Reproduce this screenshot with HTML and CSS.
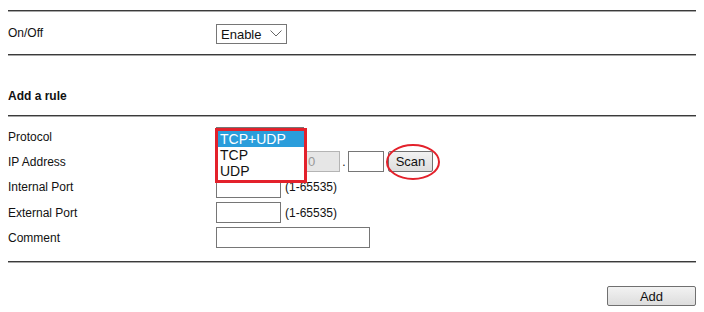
FILE: index.html
```html
<!DOCTYPE html>
<html>
<head>
    <meta charset="UTF-8">
    <title>Port Forwarding</title>
    <link rel="stylesheet" href="styles.css">
</head>
<body>
    <div class="rule"></div>
    <div class="row-switch">
        <div class="label">On/Off</div>
        <div class="field">
            <div class="select">
                <span>Enable</span>
                <svg class="chevron" width="12" height="7" viewBox="0 0 12 7"><path d="M0.5 0.5 L6 6 L11.5 0.5" fill="none" stroke="#666" stroke-width="1"/></svg>
            </div>
        </div>
    </div>
    <div class="rule"></div>

    <h2 class="section-title">Add a rule</h2>
    <div class="rule"></div>

    <div class="rule-form">
        <div class="form-row">
            <div class="label">Protocol</div>
            <div class="field proto-cell">
                <div class="select proto-select"></div>
                <!-- opened list of the protocol select -->
                <ul class="proto-list">
                    <li class="active">TCP+UDP</li>
                    <li>TCP</li>
                    <li>UDP</li>
                </ul>
            </div>
        </div>
        <div class="form-row">
            <div class="label">IP Address</div>
            <div class="field">
                <input class="ip" type="text" value="192" disabled>
                <span class="dot">.</span>
                <input class="ip" type="text" value="168" disabled>
                <span class="dot">.</span>
                <input class="ip" type="text" value="0" disabled>
                <span class="dot">.</span>
                <input class="ip" type="text">
                <span class="scan-wrap">
                    <button class="btn scan">Scan</button>
                    <svg class="mark" width="56" height="38" viewBox="0 0 56 38"><ellipse cx="28" cy="19" rx="26" ry="17" fill="none" stroke="#e3212b" stroke-width="2"/></svg>
                </span>
            </div>
        </div>
        <div class="form-row tall">
            <div class="label">Internal Port</div>
            <div class="field">
                <input class="port" type="text">
                <span class="hint">(1-65535)</span>
            </div>
        </div>
        <div class="form-row">
            <div class="label">External Port</div>
            <div class="field">
                <input class="port" type="text">
                <span class="hint">(1-65535)</span>
            </div>
        </div>
        <div class="form-row">
            <div class="label">Comment</div>
            <div class="field">
                <input class="comment" type="text">
            </div>
        </div>
    </div>
    <div class="rule rule-bottom"></div>

    <div class="actions">
        <button class="btn add">Add</button>
    </div>
</body>
</html>
```

FILE: styles.css
```css
body {
    margin: 8px;
    background-color: #fff;
    color: #111;
    font-family: "Liberation Sans", Arial, sans-serif;
    font-size: 12px;
}
.rule {
    width: 688px;
    border-top: 1px solid #3a3a3a;
    border-bottom: 1px solid #a8a8a8;
}
body > .rule:first-child {
    margin-top: 2px;
}
.row-switch {
    display: flex;
    align-items: center;
    height: 42px;
}
.label {
    width: 208px;
    line-height: 14px;
}
.field {
    display: flex;
    align-items: center;
}
.select {
    box-sizing: border-box;
    display: flex;
    align-items: center;
    justify-content: space-between;
    width: 71px;
    height: 20px;
    padding: 0 4px 0 4px;
    border: 1px solid #767676;
    font-size: 13px;
    background-color: #fff;
    margin-top: 2px;
}
.chevron {
    margin-top: -1px;
}
.section-title {
    margin: 0;
    padding: 33px 0 12px;
    font-size: 12px;
    line-height: 14px;
    font-weight: bold;
}
.rule-form {
    padding-top: 7px;
}
.form-row {
    display: flex;
    align-items: center;
    height: 25px;
}
.form-row.tall {
    height: 26px;
}
.proto-cell {
    position: relative;
}
.proto-select {
    width: 88px;
    margin-top: 0;
}
.proto-list {
    position: absolute;
    left: -1px;
    top: 1px;
    width: 86px;
    margin: 0;
    padding: 0 0 1px;
    list-style: none;
    border: 3px solid #e3212b;
    background-color: #fff;
    font-size: 14px;
    line-height: 16px;
}
.proto-list li {
    padding-left: 2px;
    color: #111;
}
.proto-list li.active {
    background-color: #2a9ddb;
    color: #fff;
}
input {
    box-sizing: border-box;
    height: 21px;
    margin: 0;
    padding: 1px 3px;
    border: 1px solid #767676;
    font-family: "Liberation Sans", Arial, sans-serif;
    font-size: 13px;
    background-color: #fff;
}
input.ip {
    width: 36px;
}
input.ip:disabled {
    background-color: #e6e6e6;
    border-color: #b4b4b4;
    color: #999;
}
.dot {
    width: 8px;
    text-align: center;
    align-self: flex-end;
    line-height: 14px;
    padding-bottom: 3px;
}
.scan-wrap {
    position: relative;
    margin-left: 4px;
}
.btn {
    box-sizing: border-box;
    height: 21px;
    padding: 0 5px;
    border: 1px solid #707070;
    border-radius: 2px;
    background: linear-gradient(#f2f2f2, #dddddd);
    font-family: "Liberation Sans", Arial, sans-serif;
    font-size: 13px;
    color: #111;
}
.scan {
    width: 45px;
}
.mark {
    position: absolute;
    left: -3px;
    top: -8px;
}
input.port {
    width: 65px;
}
.hint {
    margin-left: 4px;
}
input.comment {
    width: 154px;
}
.rule-bottom {
    margin-top: 11px;
}
.actions {
    width: 688px;
    display: flex;
    justify-content: flex-end;
    margin-top: 23px;
}
.add {
    width: 89px;
    height: 20px;
}
```
